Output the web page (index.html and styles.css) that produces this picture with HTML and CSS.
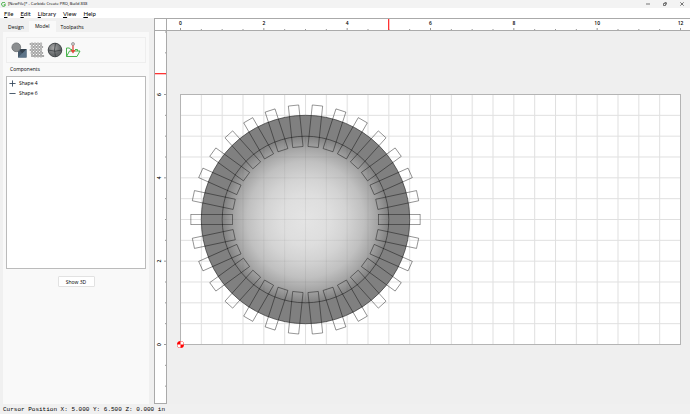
FILE: index.html
```html
<!DOCTYPE html>
<html lang="en">
<head>
<meta charset="utf-8">
<title>[NewFile]* - Carbide Create PRO, Build 838</title>
<link rel="stylesheet" href="styles.css">
</head>
<body>
<div class="app">
  <header class="titlebar">
    <svg class="logo" viewBox="0 0 10 10" aria-hidden="true"><path d="M8.600 2.600A4 4 0 1 0 9 5.600H5.600" fill="none" stroke="#36a936" stroke-width="2"/></svg>
    <span class="title">[NewFile]* - Carbide Create PRO, Build 838</span>
    <button class="win" aria-label="Minimize"><svg viewBox="0 0 6 6"><path d="M1 3h4"/></svg></button>
    <button class="win" aria-label="Restore"><svg viewBox="0 0 6 6"><path d="M1.500 2.500h2v2h-2zM2.500 1.500h1.500q.5 0 .5.500v1.500"/></svg></button>
    <button class="win" aria-label="Close"><svg viewBox="0 0 6 6"><path d="M1.300 1.300l3.400 3.400M4.700 1.300L1.300 4.700"/></svg></button>
  </header>
  <nav class="menu">
    <a href="#"><u>F</u>ile</a><a href="#"><u>E</u>dit</a><a href="#"><u>L</u>ibrary</a><a href="#"><u>V</u>iew</a><a href="#"><u>H</u>elp</a>
  </nav>
  <main class="work">
    <aside class="side">
      <div class="tabs" role="tablist">
        <button class="tab" role="tab">Design</button>
        <button class="tab active" role="tab" aria-selected="true">Model</button>
        <button class="tab" role="tab">Toolpaths</button>
      </div>
      <section class="pane">
        <div class="tools">
          <button class="tool" aria-label="Add shape">
            <svg viewBox="0 0 16 16"><rect x="7" y="7" width="8.500" height="8.500" fill="#46596b"/><path d="M7 15.500l8.500-8.500v8.500z" fill="#5d7489"/><path d="M7 7h8.500l-4.250 4.250z" fill="#34414e"/><circle cx="5.300" cy="5.300" r="4.400" fill="#8b8e90" stroke="#626669" stroke-width=".7"/></svg>
          </button>
          <button class="tool" aria-label="Add texture">
            <svg viewBox="0 0 16 16">
              <g fill="none" stroke="#858585" stroke-width="1.800" stroke-linecap="round" stroke-dasharray="1.500 1.600">
                <path d="M1.500 2H13M2.500 5H14.500M1.500 8H13M2.500 11H14.500M3.500 14H14.500M3 1.500V14M6 1.500V14.500M9 1.500V14.500M12 1.500V14.500"/>
              </g>
              <g fill="none" stroke="#e2e2e2" stroke-width=".8" stroke-linecap="round" stroke-dasharray="1.500 1.600">
                <path d="M1.500 2H13M2.500 5H14.500M1.500 8H13M2.500 11H14.500M3.500 14H14.500M3 1.500V14M6 1.500V14.500M9 1.500V14.500M12 1.500V14.500"/>
              </g>
            </svg>
          </button>
          <button class="tool" aria-label="Add image">
            <svg viewBox="0 0 16 16">
              <defs><radialGradient id="ball" cx=".4" cy=".35"><stop offset="0" stop-color="#a8a8a8"/><stop offset="1" stop-color="#66696b"/></radialGradient></defs>
              <circle cx="8" cy="8" r="6.800" fill="url(#ball)" stroke="#3a3e41" stroke-width=".9"/>
              <path d="M8.500 1.200q-2 6.800 0 13.600M1.200 8q7 2.500 13.600 0" fill="none" stroke="#3a3e41" stroke-width=".8"/>
            </svg>
          </button>
          <button class="tool" aria-label="Import">
            <svg viewBox="0 0 16 16"><path d="M1.500 14.500V6h3l1 1.500H7M10 7.500h2.500V9M1.500 14.500L4.500 9h10.500l-3 5.500z" fill="none" stroke="#49b44d" stroke-width="1"/><circle cx="8" cy="2" r="1.500" fill="#ccc" stroke="#777" stroke-width=".6"/><path d="M8 3.500V9" stroke="#e4463c" stroke-width="1.300"/><path d="M5.500 8h5L8 11.500z" fill="#e4463c"/></svg>
          </button>
        </div>
        <div class="group">
          <h2 class="legend">Components</h2>
          <ul class="list">
            <li><svg viewBox="0 0 8 8" aria-hidden="true"><path d="M.5 4h7M4 .5v7"/></svg>Shape 4</li>
            <li><svg viewBox="0 0 8 8" aria-hidden="true"><path d="M.5 4h7"/></svg>Shape 6</li>
          </ul>
        </div>
        <button class="show">Show 3D</button>
      </section>
    </aside>
    <section class="view">
      <div class="corner"></div>
      <svg class="ruler top" aria-label="Horizontal ruler">
        <g transform="translate(13.500 0)">
          <path d="M0 9v3M20.830 10v2M41.670 10v2M62.500 10v2M83.330 9v3M104.170 10v2M125 10v2M145.830 10v2M166.670 9v3M187.500 10v2M208.330 10v2M229.170 10v2M250 9v3M270.830 10v2M291.670 10v2M312.500 10v2M333.330 9v3M354.170 10v2M375 10v2M395.830 10v2M416.670 9v3M437.500 10v2M458.330 10v2M479.170 10v2M500 9v3"/>
          <text x="0" y="6">0</text><text x="83.330" y="6">2</text><text x="166.670" y="6">4</text><text x="250" y="6">6</text><text x="333.330" y="6">8</text><text x="416.670" y="6">10</text><text x="500" y="6">12</text>
          <rect class="mark" x="207.500" y="0" width="1.300" height="12"/>
        </g>
      </svg>
      <svg class="ruler left" aria-label="Vertical ruler">
        <g transform="translate(0 313.500)">
          <path d="M10 41.670h2M10 20.830h2M9 0h3M10-20.830h2M10-41.670h2M10-62.500h2M9-83.330h3M10-104.170h2M10-125h2M10-145.830h2M9-166.670h3M10-187.500h2M10-208.330h2M10-229.170h2M9-250h3M10-270.830h2M10-291.670h2M10-312.500h2"/>
          <text transform="translate(6 0) rotate(-90)">0</text><text transform="translate(6 -83.330) rotate(-90)">2</text><text transform="translate(6 -166.670) rotate(-90)">4</text><text transform="translate(6 -250) rotate(-90)">6</text>
          <rect class="mark" x="0" y="-271.500" width="13" height="1.300"/>
        </g>
      </svg>
      <svg class="canvas" aria-label="Design canvas">
        <defs>
          <pattern id="grid" width="20.833" height="20.833" patternUnits="userSpaceOnUse"><path d="M.5 0v20.833M0 .5h20.833" stroke="#000" stroke-opacity=".12"/></pattern>
          <radialGradient id="dome">
            <stop offset="0" stop-color="#e4e4e4"/><stop offset=".3" stop-color="#dedede"/><stop offset=".5" stop-color="#d3d3d3"/><stop offset=".7" stop-color="#c0c0c0"/><stop offset=".85" stop-color="#a6a6a6"/><stop offset=".95" stop-color="#8e8e8e"/><stop offset="1" stop-color="#808080"/>
          </radialGradient>
          <rect id="tooth" x="72.900" y="-5.200" width="41.700" height="10.400"/>
          <g id="sector"><use href="#tooth"/><use href="#tooth" transform="rotate(12)"/><use href="#tooth" transform="rotate(24)"/><use href="#tooth" transform="rotate(36)"/><use href="#tooth" transform="rotate(48)"/></g>
          <g id="gear"><use href="#sector"/><use href="#sector" transform="rotate(60)"/><use href="#sector" transform="rotate(120)"/><use href="#sector" transform="rotate(180)"/><use href="#sector" transform="rotate(240)"/><use href="#sector" transform="rotate(300)"/></g>
        </defs>
        <g transform="translate(13 63)">
          <rect x=".5" y=".5" width="500" height="250" fill="#fff"/>
          <rect width="501" height="251" fill="url(#grid)"/>
          <rect x=".5" y=".5" width="500" height="250" fill="none" stroke="#b4b4b4"/>
          <g transform="translate(125.500 125.500)" fill="none">
            <circle r="104.200" fill="#808080"/>
            <circle r="83.300" fill="url(#dome)"/>
            <path d="M-62.500-54V54M-41.670-72V72M-20.830-80V80M0-83V83M20.830-80V80M41.670-72V72M62.500-54V54M-54-62.500H54M-72-41.670H72M-80-20.830H80M-83 0H83M-80 20.830H80M-72 41.670H72M-54 62.500H54" stroke="#000" stroke-opacity=".05"/>
            <circle r="104.200" stroke="#333" stroke-width=".7"/>
            <circle r="83.300" stroke="#333" stroke-width=".7"/>
            <use href="#gear" stroke="#000" stroke-opacity=".65" stroke-width=".6"/>
          </g>
          <g transform="translate(.5 250.500)"><circle r="3.500" fill="#f00"/><path d="M0 0V-3.200A3.200 3.200 0 0 1 3.200 0zM0 0V3.200A3.200 3.200 0 0 1-3.200 0z" fill="#fff"/></g>
        </g>
      </svg>
    </section>
  </main>
  <footer class="status">Cursor Position X: 5.000 Y: 6.500 Z: 0.000 in</footer>
</div>
</body>
</html>
```
FILE: styles.css
```css
* { box-sizing: border-box; }
body {
  margin: 0;
  font: 5px/8px "Open Sans", "Noto Sans", sans-serif;
  color: #000;
  background: #f0f0f0;
}
button {
  font: inherit;
  color: inherit;
  padding: 0;
  border: 0;
  background: none;
}
svg { display: block; }
.app {
  display: flex;
  flex-direction: column;
  height: 100vh;
}
.titlebar {
  display: flex;
  align-items: center;
  height: 8px;
  padding-left: 1px;
  background: #f3f3f3;
}
.logo { width: 5px; height: 5px; }
.title { flex: 1; margin-left: 2px; font-size: 4px; }
.win { width: 17px; height: 8px; }
.win svg {
  width: 6px;
  height: 6px;
  margin: auto;
  fill: none;
  stroke: #222;
  stroke-width: .6;
}
.menu {
  display: flex;
  gap: 7px;
  height: 10px;
  padding-left: 4px;
  background: #fff;
  font-family: Lato, "Open Sans", sans-serif;
  font-size: 6px;
  line-height: 12px;
}
.menu a { color: inherit; text-decoration: none; }
.work { display: flex; flex: 1; min-height: 0; }
.side {
  display: flex;
  flex-direction: column;
  width: 154px;
  padding: 3px 5px 0 3px;
}
.tabs { display: flex; height: 11px; }
.tab { padding: 2px 5px 0; line-height: 9px; }
.tab.active { background: #f9f9f9; padding: 0 6px; }
.pane {
  display: flex;
  flex-direction: column;
  flex: 1;
  padding: 5px 3px;
  background: #f9f9f9;
}
.tools {
  display: flex;
  gap: 2px;
  height: 26px;
  padding: 4px;
  border: 1px solid #eee;
}
.tool, .tool svg { width: 16px; height: 16px; }
.group { margin-top: 2px; }
.legend {
  margin: 0;
  padding-left: 4px;
  font-size: 5px;
  font-weight: 400;
  line-height: 8px;
}
.list {
  height: 193px;
  margin: 3px 0 0;
  padding: 1px 2px;
  border: 1px solid #bbb;
  background: #fff;
  list-style: none;
}
.list li { display: flex; align-items: center; gap: 3px; height: 10px; }
.list svg {
  width: 7px;
  height: 7px;
  stroke: #34475b;
  stroke-width: 1;
}
.show {
  align-self: center;
  width: 37px;
  height: 11px;
  margin-top: 7px;
  border: 1px solid #e2e2e2;
  border-radius: 1px;
  background: #fff;
}
.view {
  display: grid;
  grid-template: 13px 1fr / 13px 1fr;
  flex: 1;
  min-width: 0;
}
.corner, .ruler {
  border: 1px solid #aaa;
  border-width: 1px 0 0 1px;
  background: #fff;
}
.corner { border-right-width: 1px; border-bottom-width: 1px; }
.ruler { width: 100%; height: 100%; stroke: #999; }
.top { border-width: 1px 0; }
.left { border-width: 0 1px 1px; }
.ruler text {
  fill: #000;
  stroke: none;
  font-size: 5px;
  font-weight: 600;
  text-anchor: middle;
}
.ruler .mark { fill: #f33; stroke: none; }
.canvas { width: 100%; height: 100%; background: #efefef; }
.status {
  height: 10px;
  padding-left: 3px;
  font: 6px/11px "Liberation Mono", monospace;
}
```
